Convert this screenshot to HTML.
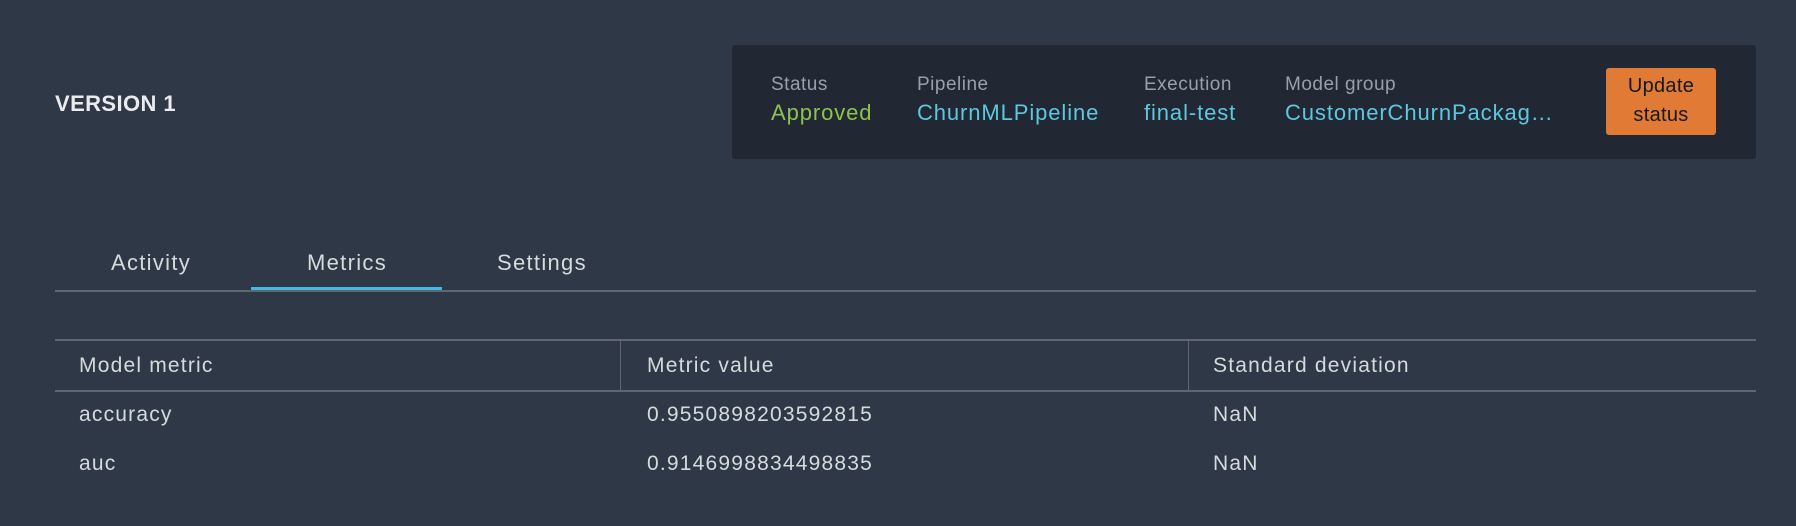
<!DOCTYPE html>
<html><head><style>
body{margin:0;width:1796px;height:526px;background:#2f3847;font-family:"Liberation Sans",sans-serif;color:#d5dbdb;position:relative;overflow:hidden}
.a{position:absolute;white-space:nowrap}
.ver{left:55px;top:91px;font-size:22px;letter-spacing:0.4px;font-weight:bold;color:#e9ebed}
.panel{left:732px;top:45px;width:1024px;height:114px;background:#222833;border-radius:3px}
.lab{font-size:19px;letter-spacing:0.5px;color:#95a0ad;top:29px}
.val{font-size:22px;letter-spacing:0.9px;top:55px}
.btn{left:874px;top:23px;width:110px;height:67px;background:#e07a35;border-radius:3px;color:#16191f;font-size:20px;letter-spacing:0.3px;text-align:center;line-height:29px;padding-top:4px;box-sizing:border-box}
.tab{font-size:22px;letter-spacing:1.3px;top:250px;color:#d5dbdb}
.t{font-size:21px;letter-spacing:1.2px;color:#d5dbdb}
</style></head><body>
<div class="a ver">VERSION 1</div>
<div class="a panel">
<div class="a lab" style="left:39px">Status</div>
<div class="a lab" style="left:185px">Pipeline</div>
<div class="a lab" style="left:412px">Execution</div>
<div class="a lab" style="left:553px">Model group</div>
<div class="a val" style="left:39px;color:#8dc24e">Approved</div>
<div class="a val" style="left:185px;color:#5dc7de">ChurnMLPipeline</div>
<div class="a val" style="left:412px;color:#5dc7de">final-test</div>
<div class="a val" style="left:553px;color:#5dc7de">CustomerChurnPackag…</div>
<div class="a btn">Update<br>status</div>
</div>
<div class="a tab" style="left:111px">Activity</div>
<div class="a tab" style="left:307px">Metrics</div>
<div class="a tab" style="left:497px">Settings</div>
<div class="a" style="left:55px;top:290px;width:1701px;height:2px;background:#5f6670"></div>
<div class="a" style="left:251px;top:287px;width:191px;height:3px;background:#44b9e0"></div>
<div class="a" style="left:55px;top:339px;width:1701px;height:2px;background:#5f6670"></div>
<div class="a" style="left:55px;top:390px;width:1701px;height:2px;background:#5f6670"></div>
<div class="a" style="left:620px;top:341px;width:1px;height:49px;background:#5f6670"></div>
<div class="a" style="left:1188px;top:341px;width:1px;height:49px;background:#5f6670"></div>
<div class="a t" style="left:79px;top:354px">Model metric</div>
<div class="a t" style="left:647px;top:354px">Metric value</div>
<div class="a t" style="left:1213px;top:354px">Standard deviation</div>
<div class="a t" style="left:79px;top:403px">accuracy</div>
<div class="a t" style="left:647px;top:403px">0.9550898203592815</div>
<div class="a t" style="left:1213px;top:403px">NaN</div>
<div class="a t" style="left:79px;top:452px">auc</div>
<div class="a t" style="left:647px;top:452px">0.9146998834498835</div>
<div class="a t" style="left:1213px;top:452px">NaN</div>
</body></html>
